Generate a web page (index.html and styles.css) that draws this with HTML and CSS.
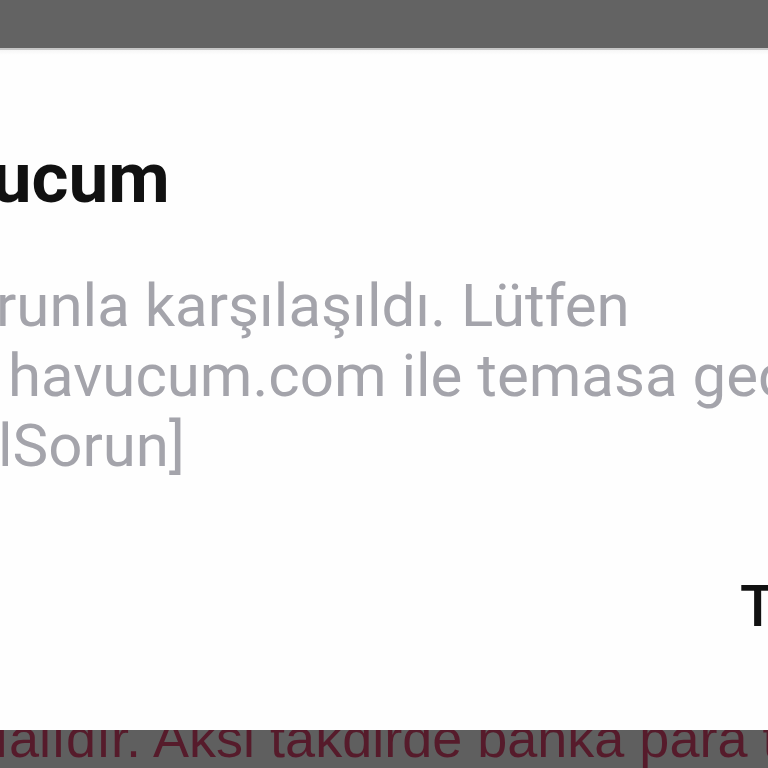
FILE: index.html
```html
<!DOCTYPE html>
<html lang="tr">
<head>
<meta charset="utf-8">
<link rel="stylesheet" href="styles.css">
</head>
<body>
<div class="screen">
  <div class="scrim-top"></div>
  <div class="dialog">
    <div class="title">uucum</div>
    <div class="message">
      <div class="line l1">runla karşılaşıldı. Lütfen</div>
      <div class="line l2">havucum.com ile temasa geçiniz.</div>
      <div class="line l3">lSorun]</div>
    </div>
    <div class="actions">
      <span class="btn">TAMAM</span>
    </div>
  </div>
  <div class="scrim-bottom">
    <div class="behind">ıalıdır. Aksi takdirde banka para transferi</div>
  </div>
</div>
</body>
</html>
```

FILE: styles.css
```css
html, body {
  margin: 0;
  padding: 0;
  width: 768px;
  height: 768px;
  overflow: hidden;
  background: #616161;
}
.screen {
  width: 768px;
  height: 768px;
  display: flex;
  flex-direction: column;
  overflow: hidden;
}
.scrim-top {
  height: 48px;
  flex: none;
  background: #636363;
}
.dialog {
  height: 680px;
  flex: none;
  background: #fefefe;
  border-top: 2px solid #c6c6c6;
  background-image: linear-gradient(#f6f6f6, #fefefe 5px);
  overflow: hidden;
  display: flex;
  flex-direction: column;
}
.title {
  margin-top: 92px;
  margin-left: -48px;
  font-family: Roboto, "Noto Sans", sans-serif;
  font-weight: 700;
  font-size: 71px;
  line-height: 71px;
  color: #111111;
  white-space: nowrap;
}
.message {
  margin-top: 58px;
  font-family: Roboto, "Noto Sans", sans-serif;
  font-size: 60px;
  line-height: 70px;
  color: #a4a4ab;
}
.line {
  white-space: nowrap;
}
.l1 { margin-left: -4px; }
.l2 { margin-left: 8px; }
.l3 { margin-left: -2px; }
.actions {
  margin-top: 96px;
  display: flex;
  justify-content: flex-start;
  padding-left: 740px;
  white-space: nowrap;
}
.btn {
  font-family: Roboto, "Noto Sans", sans-serif;
  font-weight: 500;
  font-size: 58px;
  line-height: 58px;
  color: #111111;
}
.scrim-bottom {
  height: 38px;
  flex: none;
  background: #5f5f5f;
  overflow: hidden;
}
.behind {
  margin-top: -19px;
  margin-left: -6px;
  font-family: "Liberation Sans", Arial, sans-serif;
  font-size: 54px;
  line-height: 54px;
  color: #561b2b;
  white-space: nowrap;
}
```
